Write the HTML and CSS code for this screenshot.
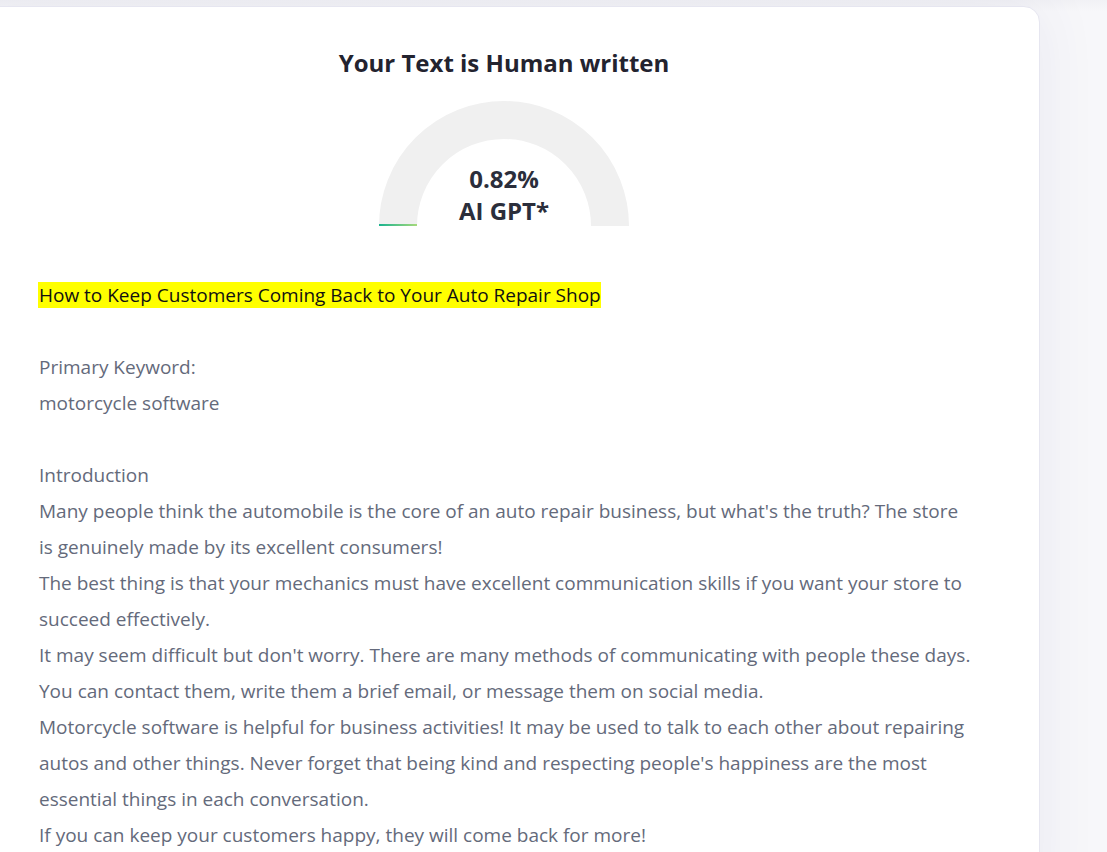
FILE: index.html
```html
<!DOCTYPE html>
<html lang="en">
<head>
  <meta charset="UTF-8" />
  <meta name="viewport" content="width=device-width, initial-scale=1.0"/>
  <title>AI Content Detector - Result</title>
  <link rel="stylesheet" href="styles.css">
</head>
<body>
  <div class="page">
    <div class="card">
      <div class="score">
        <h2 class="verdict">Your Text is Human written</h2>

        <div class="gauge">
          <svg width="250" height="126" viewBox="0 0 250 126">
            <defs>
              <linearGradient id="gaugeFill" x1="0" x2="1" y1="0" y2="0">
                <stop offset="0" stop-color="#1ab38e"/>
                <stop offset="1" stop-color="#a6d97c"/>
              </linearGradient>
            </defs>
            <path d="M19 126 A106 106 0 0 1 231 126" fill="none" stroke="#f0f0f0" stroke-width="38"/>
            <rect x="0" y="124" width="38" height="2" fill="url(#gaugeFill)"/>
          </svg>
          <div class="gauge-label">
            <span>0.82%</span>
            <span>AI GPT*</span>
          </div>
        </div>
      </div>

      <div class="result"><span class="hl">How to Keep Customers Coming Back to Your Auto Repair Shop</span>

Primary Keyword:
motorcycle software

Introduction
Many people think the automobile is the core of an auto repair business, but what's the truth? The store is genuinely made by its excellent consumers!
The best thing is that your mechanics must have excellent communication skills if you want your store to succeed effectively.
It may seem difficult but don't worry. There are many methods of communicating with people these days. You can contact them, write them a brief email, or message them on social media.
Motorcycle software is helpful for business activities! It may be used to talk to each other about repairing autos and other things. Never forget that being kind and respecting people's happiness are the most essential things in each conversation.
If you can keep your customers happy, they will come back for more!</div>
    </div>
  </div>
</body>
</html>
```

FILE: styles.css
```css
body {
  margin: 0;
  background-color: #f7f7fa;
  font-family: "Open Sans", "Liberation Sans", sans-serif;
  color: #2a2d3a;
}
.page {
  padding-top: 6px;
  height: 846px;
  overflow: hidden;
  background: linear-gradient(to bottom, #f1f1f5 0, #f7f7fa 12px);
}
.card {
  box-sizing: border-box;
  width: 1072px;
  margin-left: -32px;
  min-height: 900px;
  padding: 40px 64px 0 70px;
  background-color: #fff;
  border: 1px solid #e6e6f0;
  border-radius: 16px;
  box-shadow: 0 0 60px rgba(70, 70, 130, 0.08);
}
.score {
  width: 930px;
  display: flex;
  flex-direction: column;
  align-items: center;
  gap: 21px;
}
.verdict {
  margin: 0;
  font-size: 24px;
  line-height: 32px;
  font-weight: 700;
  color: #23232f;
}
.gauge {
  position: relative;
  width: 250px;
  height: 126px;
}
.gauge svg {
  display: block;
}
.gauge-label {
  position: absolute;
  left: 0;
  right: 0;
  top: 63px;
  display: flex;
  flex-direction: column;
  align-items: center;
  font-size: 24px;
  line-height: 32px;
  font-weight: 700;
  color: #2b2e3b;
}
.result {
  margin-top: 51px;
  white-space: pre-line;
  font-size: 19px;
  line-height: 36px;
  color: #646a7b;
}
.hl {
  background-color: #ffff00;
  color: #111;
  margin-left: -1px;
  padding-left: 1px;
}
```
